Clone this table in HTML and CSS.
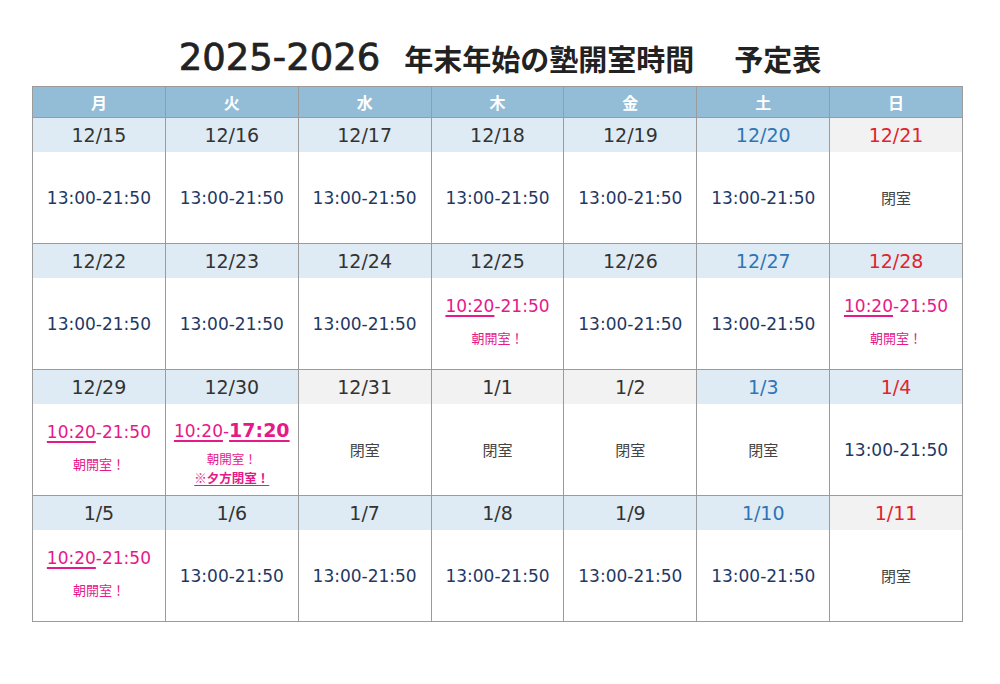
FILE: index.html
```html
<!DOCTYPE html>
<html lang="ja">
<head>
<meta charset="utf-8">
<title>2025-2026 年末年始の塾開室時間 予定表</title>
<link rel="stylesheet" href="styles.css">
</head>
<body>
<h1 class="title"><span class="t-num">2025-2026</span><span class="t-main">年末年始の塾開室時間</span><span class="t-sub">予定表</span></h1>

<div class="cal">
  <div class="row head">
    <div>月</div><div>火</div><div>水</div><div>木</div><div>金</div><div>土</div><div>日</div>
  </div>

  <div class="week">
    <div class="d">12/15</div><div class="d">12/16</div><div class="d">12/17</div><div class="d">12/18</div><div class="d">12/19</div><div class="d sat">12/20</div><div class="d sun off">12/21</div>
    <div class="b"><span class="tm">13:00-21:50</span></div>
    <div class="b"><span class="tm">13:00-21:50</span></div>
    <div class="b"><span class="tm">13:00-21:50</span></div>
    <div class="b"><span class="tm">13:00-21:50</span></div>
    <div class="b"><span class="tm">13:00-21:50</span></div>
    <div class="b"><span class="tm">13:00-21:50</span></div>
    <div class="b"><span class="closed">閉室</span></div>
  </div>

  <div class="week">
    <div class="d">12/22</div><div class="d">12/23</div><div class="d">12/24</div><div class="d">12/25</div><div class="d">12/26</div><div class="d sat">12/27</div><div class="d sun">12/28</div>
    <div class="b"><span class="tm">13:00-21:50</span></div>
    <div class="b"><span class="tm">13:00-21:50</span></div>
    <div class="b"><span class="tm">13:00-21:50</span></div>
    <div class="b early"><span class="tm pink"><u>10:20</u>-21:50</span><span class="note">朝開室！</span></div>
    <div class="b"><span class="tm">13:00-21:50</span></div>
    <div class="b"><span class="tm">13:00-21:50</span></div>
    <div class="b early"><span class="tm pink"><u>10:20</u>-21:50</span><span class="note">朝開室！</span></div>
  </div>

  <div class="week">
    <div class="d">12/29</div><div class="d">12/30</div><div class="d off">12/31</div><div class="d off">1/1</div><div class="d off">1/2</div><div class="d sat">1/3</div><div class="d sun">1/4</div>
    <div class="b early"><span class="tm pink"><u>10:20</u>-21:50</span><span class="note">朝開室！</span></div>
    <div class="b special"><span class="tm pink"><u>10:20</u>-<u class="big">17:20</u></span><span class="note dual">朝開室！<br><u class="warn">※夕方閉室！</u></span></div>
    <div class="b"><span class="closed">閉室</span></div>
    <div class="b"><span class="closed">閉室</span></div>
    <div class="b"><span class="closed">閉室</span></div>
    <div class="b"><span class="closed">閉室</span></div>
    <div class="b"><span class="tm">13:00-21:50</span></div>
  </div>

  <div class="week">
    <div class="d">1/5</div><div class="d">1/6</div><div class="d">1/7</div><div class="d">1/8</div><div class="d">1/9</div><div class="d sat">1/10</div><div class="d sun off">1/11</div>
    <div class="b early"><span class="tm pink"><u>10:20</u>-21:50</span><span class="note">朝開室！</span></div>
    <div class="b"><span class="tm">13:00-21:50</span></div>
    <div class="b"><span class="tm">13:00-21:50</span></div>
    <div class="b"><span class="tm">13:00-21:50</span></div>
    <div class="b"><span class="tm">13:00-21:50</span></div>
    <div class="b"><span class="tm">13:00-21:50</span></div>
    <div class="b"><span class="closed">閉室</span></div>
  </div>
</div>
</body>
</html>
```

FILE: styles.css
```css
* { box-sizing: border-box; }
html, body { margin: 0; padding: 0; background: #fff; }
body {
  width: 1000px;
  height: 684px;
  font-family: "DejaVu Sans", "Noto Sans CJK JP", sans-serif;
  color: #333;
}

.title {
  margin: 0 0 8px 0;
  padding-top: 38px;
  height: 78px;
  display: flex;
  justify-content: center;
  align-items: center;
  line-height: 40px;
  font-weight: 700;
  color: #222;
  font-size: 29px;
}
.title .t-num {
  font-family: "DejaVu Sans", sans-serif;
  font-weight: 400;
  font-size: 37px;
  -webkit-text-stroke: 0.7px #222;
  margin-right: 24px;
}
.title .t-main, .title .t-sub {
  font-family: "Noto Sans CJK JP", sans-serif;
  font-weight: 700;
}
.title .t-sub { margin-left: 40px; }

.cal {
  margin-left: 32px;
  width: 931px;
  background: #9b9b9b;
  padding: 1px;
  display: flex;
  flex-direction: column;
  gap: 1px;
}

.row, .week {
  display: grid;
  grid-template-columns: repeat(7, 1fr);
  column-gap: 1px;
}
.head > div {
  height: 30px;
  background: #93bdd6;
  color: #fff;
  font-family: "Noto Sans CJK JP", sans-serif;
  font-weight: 700;
  font-size: 16px;
  display: flex;
  align-items: center;
  justify-content: center;
}

.week { grid-template-rows: 34px 91px; }

.d {
  background: #deebf4;
  display: flex;
  align-items: center;
  justify-content: center;
  font-size: 19px;
  color: #333;
}
.d.off { background: #f2f2f2; }
.d.sat { color: #2e75b6; }
.d.sun { color: #e3232b; }

.b {
  background: #fff;
  display: flex;
  flex-direction: column;
  align-items: center;
  justify-content: center;
}
.tm {
  font-size: 17px;
  color: #1f3864;
  line-height: 24px;
}
.closed {
  font-family: "Noto Sans CJK JP", sans-serif;
  font-size: 15px;
  color: #444;
}
.early { padding-bottom: 8px; }
.special { padding-top: 6px; }
.pink { color: #e5198a; }
.pink u { text-decoration-thickness: 2px; text-underline-offset: 3px; }
.pink .big { font-size: 19px; font-weight: 700; }
.note {
  font-family: "Noto Sans CJK JP", sans-serif;
  font-size: 13px;
  color: #e5198a;
  line-height: 16px;
  white-space: nowrap;
  margin-top: 12px;
  text-align: center;
}
.note.dual { margin-top: 7px; font-size: 12.5px; line-height: 18.5px; }
.warn { font-weight: 700; text-underline-offset: 2px; }
```
